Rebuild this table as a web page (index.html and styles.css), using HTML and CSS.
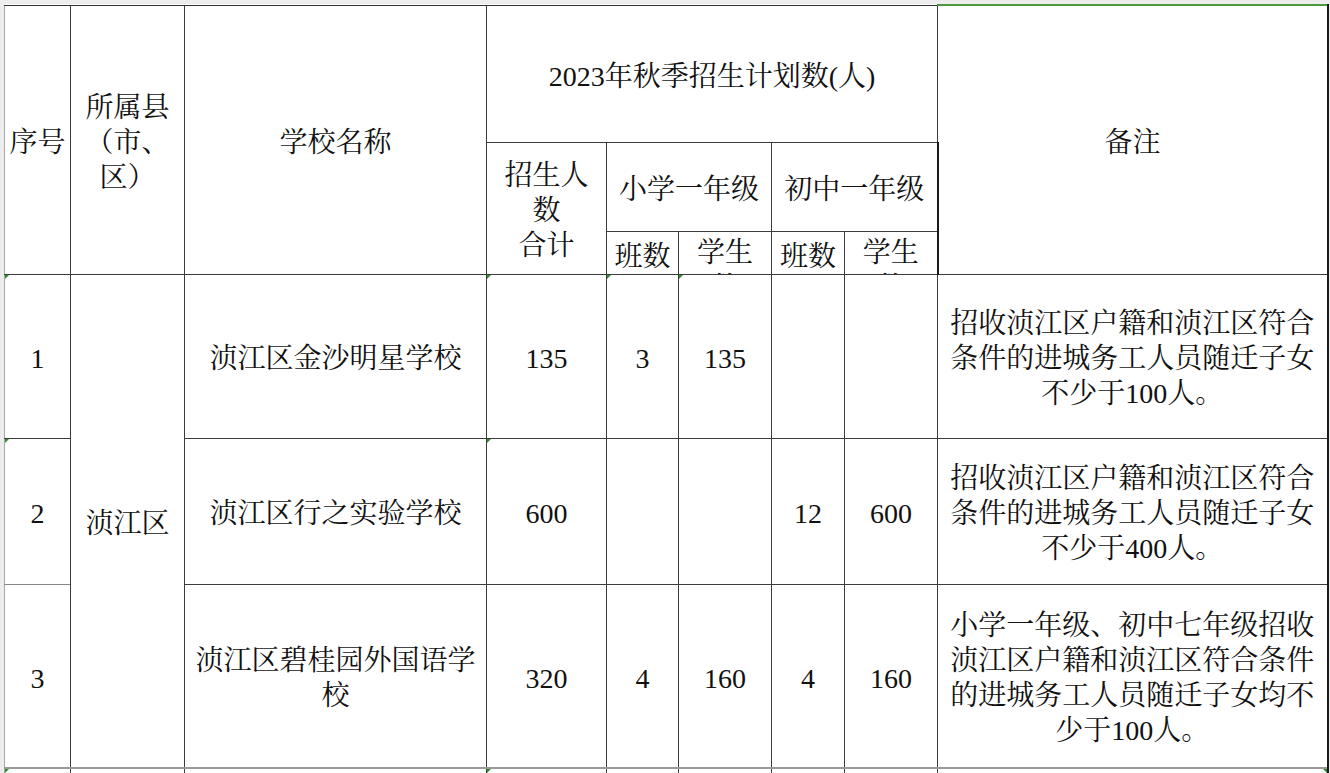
FILE: index.html
```html
<!DOCTYPE html>
<html lang="zh-CN">
<head>
<meta charset="utf-8">
<title>2023年秋季招生计划</title>
<link rel="stylesheet" href="styles.css">
</head>
<body>
<div class="sheet">
<table class="grid">
  <colgroup>
    <col class="c-no"><col class="c-county"><col class="c-school"><col class="c-total">
    <col class="c-cls"><col class="c-stu"><col class="c-cls2"><col class="c-stu"><col class="c-note">
  </colgroup>
  <tr class="h1">
    <td rowspan="3">序号</td>
    <td rowspan="3">所属县<br>（市、<br>区）</td>
    <td rowspan="3">学校名称</td>
    <td colspan="5">2023年秋季招生计划数(人)</td>
    <td rowspan="3" class="note-head">备注</td>
  </tr>
  <tr class="h2">
    <td rowspan="2" class="total-head">招生人<br>数<br>合计</td>
    <td colspan="2">小学一年级</td>
    <td colspan="2">初中一年级</td>
  </tr>
  <tr class="h3">
    <td><div class="clip"><div class="clip-in">班数</div></div></td>
    <td><div class="clip"><div class="clip-in up">学生<br>数</div></div></td>
    <td><div class="clip"><div class="clip-in">班数</div></div></td>
    <td><div class="clip"><div class="clip-in up">学生<br>数</div></div></td>
  </tr>
  <tr class="r1">
    <td class="flag">1</td>
    <td rowspan="3" class="dark-r">浈江区</td>
    <td>浈江区金沙明星学校</td>
    <td class="flag">135</td>
    <td class="flag">3</td>
    <td class="flag">135</td>
    <td></td>
    <td></td>
    <td>招收浈江区户籍和浈江区符合<br>条件的进城务工人员随迁子女<br>不少于100人。</td>
  </tr>
  <tr class="r2">
    <td class="flag light-b">2</td>
    <td>浈江区行之实验学校</td>
    <td class="flag">600</td>
    <td></td>
    <td></td>
    <td>12</td>
    <td>600</td>
    <td>招收浈江区户籍和浈江区符合<br>条件的进城务工人员随迁子女<br>不少于400人。</td>
  </tr>
  <tr class="r3">
    <td class="light-t">3</td>
    <td>浈江区碧桂园外国语学<br>校</td>
    <td>320</td>
    <td>4</td>
    <td>160</td>
    <td>4</td>
    <td>160</td>
    <td>小学一年级、初中七年级招收<br>浈江区户籍和浈江区符合条件<br>的进城务工人员随迁子女均不<br>少于100人。</td>
  </tr>
  <tr class="r4">
    <td class="flag"></td>
    <td></td>
    <td></td>
    <td class="flag"></td>
    <td></td>
    <td></td>
    <td></td>
    <td></td>
    <td class="flag-r"></td>
  </tr>
</table>
</div>
</body>
</html>
```

FILE: styles.css
```css
html, body {
  margin: 0;
  padding: 0;
}
body {
  background: #ededed;
  width: 1330px;
  height: 773px;
  overflow: hidden;
}
.sheet {
  padding: 4px 0 0 4px;
}
.grid {
  border-collapse: collapse;
  table-layout: fixed;
  width: 1323px;
  background: #fff;
  font-family: "Liberation Serif", "Noto Serif CJK SC", "Noto Sans CJK SC", serif;
  font-size: 28px;
  line-height: 35px;
  color: #111;
}
.c-no { width: 66px; }
.c-county { width: 114px; }
.c-school { width: 302px; }
.c-total { width: 120px; }
.c-cls { width: 72px; }
.c-stu { width: 93px; }
.c-cls2 { width: 73px; }
.c-note { width: 390px; }

.grid td {
  border: 1px solid #3c3c3c;
  text-align: center;
  vertical-align: middle;
  padding: 5px 1px 0;
  position: relative;
}
.grid tr:first-child td {
  border-top-color: #333;
}
.grid td:first-child {
  border-left-color: #a8a8a8;
}
.grid td:last-child {
  border-right: 2px solid #1a1a1a;
}
.note-head {
  border-top: 2px solid #4a9a3a !important;
}
.h1 { height: 137px; }
.h2 { height: 89px; }
.h3 { height: 43px; }
.r1 { height: 164px; }
.r2 { height: 146px; }
.r3 { height: 184px; }
.r4 { height: 8px; }

.h3 td {
  padding: 0;
  vertical-align: top;
}
.clip {
  height: 42px;
  overflow: hidden;
}
.clip-in {
  padding-top: 7px;
}
.clip-in.up {
  padding-top: 3px;
}
.total-head {
  padding-bottom: 2px;
}
.r2 td, .r3 td {
  border-top-color: #777;
}
.r4 td {
  border-top: 2px solid #999;
}
.light-b { border-bottom-color: #888 !important; }

.flag::before,
.flag-r::before {
  content: "";
  position: absolute;
  top: 0;
  left: 0;
  width: 0;
  height: 0;
  border-top: 4px solid #2e8b2e;
  border-right: 4px solid transparent;
}
.flag-r::before {
  left: auto;
  right: 0;
  border-right: none;
  border-left: 4px solid transparent;
}
```
